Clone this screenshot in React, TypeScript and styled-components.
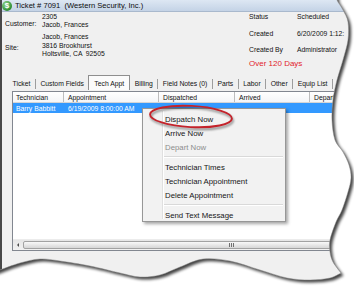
import React from 'react'
import styled, { createGlobalStyle } from 'styled-components'

const GlobalStyle = createGlobalStyle`
  *, *::before, *::after { box-sizing: border-box; }
  html, body { margin: 0; padding: 0; background: #fff; }
  body { overflow: hidden; }
`

type Pt = [number, number]

// hand-traced torn edge of the cut-out screenshot
const rightEdge: Pt[] = [
  [337, -6], [337, 0], [343, 10], [348, 22], [348, 40], [343, 60], [337, 80], [333, 100],
  [332, 120], [335, 140], [343, 152], [349, 165], [351, 178], [348, 192], [342, 210],
  [336, 222], [330, 240], [330, 252], [333, 262], [341, 273],
]
const bottomEdge: Pt[] = [
  [341, 273], [330, 278], [310, 280], [287, 278], [260, 270], [230, 261], [203, 259],
  [180, 267], [160, 275], [140, 277], [120, 273], [90, 266], [60, 261], [40, 259],
  [20, 263], [0, 270], [-6, 272],
]

const smooth = (pts: Pt[]) => {
  let d = ''
  for (let i = 0; i < pts.length - 1; i++) {
    const p0 = pts[i - 1] || pts[i]
    const p1 = pts[i]
    const p2 = pts[i + 1]
    const p3 = pts[i + 2] || p2
    const c1 = [p1[0] + (p2[0] - p0[0]) / 6, p1[1] + (p2[1] - p0[1]) / 6]
    const c2 = [p2[0] - (p3[0] - p1[0]) / 6, p2[1] - (p3[1] - p1[1]) / 6]
    d += ` C${c1[0].toFixed(1)} ${c1[1].toFixed(1)} ${c2[0].toFixed(1)} ${c2[1].toFixed(1)} ${p2[0]} ${p2[1]}`
  }
  return d
}

const paper = `M-6 -6 L337 -6${smooth(rightEdge)}${smooth(bottomEdge)} L-6 -6 Z`

const tabs = ['Ticket', 'Custom Fields', 'Tech Appt', 'Billing', 'Field Notes (0)', 'Parts', 'Labor', 'Other', 'Equip List']
const activeTab = 'Tech Appt'

const columns = [
  { label: 'Technician', w: 51, value: 'Barry Babbitt' },
  { label: 'Appointment', w: 95, value: '6/19/2009 8:00:00 AM' },
  { label: 'Dispatched', w: 76, value: '' },
  { label: 'Arrived', w: 75, value: '' },
  { label: 'Departed', w: 80, value: '' },
]

const menuItems: ({ sep: true } | { label: string; disabled?: boolean })[] = [
  { label: 'Dispatch Now' },
  { label: 'Arrive Now' },
  { label: 'Depart Now', disabled: true },
  { sep: true },
  { label: 'Technician Times' },
  { label: 'Technician Appointment' },
  { label: 'Delete Appointment' },
  { sep: true },
  { label: 'Send Text Message' },
]

const App = () => {
  return (
    <>
      <GlobalStyle />
      <Frame>
        <Window>
          <TitleBar>
            <AppIcon>$</AppIcon>
            <span>Ticket # 7091  (Western Security, Inc.)</span>
          </TitleBar>

          <Header>
            <LeftBlock>
              <Group>
                <Label>Customer:</Label>
                <Lines>
                  <div>2305</div>
                  <div>Jacob, Frances</div>
                </Lines>
              </Group>
              <Group>
                <Label>Site:</Label>
                <Lines>
                  <div>Jacob, Frances</div>
                  <div>3816 Brookhurst</div>
                  <div>Holtsville, CA  92505</div>
                </Lines>
              </Group>
            </LeftBlock>
            <RightBlock>
              <InfoRow><span>Status</span><span>Scheduled</span></InfoRow>
              <InfoRow><span>Created</span><span>6/20/2009 1:12:</span></InfoRow>
              <InfoRow><span>Created By</span><span>Administrator</span></InfoRow>
              <Warning>Over 120 Days</Warning>
            </RightBlock>
          </Header>

          <TabStrip>
            {tabs.map((t, i) => {
              const next = tabs[i + 1]
              const showSep = t !== activeTab && next !== activeTab
              return (
                <React.Fragment key={t}>
                  <Tab $active={t === activeTab}>{t}</Tab>
                  {showSep && <TabSep />}
                </React.Fragment>
              )
            })}
          </TabStrip>

          <ListBox>
            <HeaderRow>
              {columns.map((c, i) => (
                <HeadCell key={c.label} $w={c.w} $first={i === 0}>{c.label}</HeadCell>
              ))}
            </HeaderRow>
            <SelectedRow>
              {columns.map((c, i) => (
                <RowCell key={c.label} $w={c.w} $first={i === 0}>{c.value}</RowCell>
              ))}
            </SelectedRow>
            <ListBody />
            <ScrollBar>
              <ArrowBtn><ArrowLeft /></ArrowBtn>
              <Thumb>
                <Grip><i /><i /><i /></Grip>
              </Thumb>
            </ScrollBar>
          </ListBox>
        </Window>

        <Menu>
          {menuItems.map((m, i) =>
            'sep' in m ? (
              <MenuSep key={i} />
            ) : (
              <MenuItem key={i} $disabled={m.disabled}>{m.label}</MenuItem>
            )
          )}
        </Menu>

        <Circle width="96" height="34" viewBox="0 0 96 34">
          <ellipse cx="45" cy="14.5" rx="41" ry="10.6" fill="none" stroke="#c4232b" strokeWidth="1.9" transform="rotate(3 45 14.5)" />
        </Circle>

        <TornEdge width="354" height="286" viewBox="0 0 354 286">
          <defs>
            <mask id="outside">
              <rect x="-20" y="-20" width="400" height="330" fill="#fff" />
              <path d={paper} fill="#000" />
            </mask>
            <filter id="soft" x="-10%" y="-10%" width="120%" height="120%">
              <feGaussianBlur stdDeviation="1.5" />
            </filter>
          </defs>
          <path d={`M-20 -20 H380 V310 H-20 Z ${paper}`} fill="#fff" fillRule="evenodd" />
          <g mask="url(#outside)">
            <path d={paper} fill="#000" opacity="0.75" transform="translate(2.5 2.5)" filter="url(#soft)" />
          </g>
          <path d={paper} fill="none" stroke="#8a8a8a" strokeWidth="0.5" />
        </TornEdge>
      </Frame>
    </>
  )
}

export default App

const Frame = styled.div`
  position: relative;
  width: 354px;
  height: 286px;
  overflow: hidden;
  background: #fff;
  font-family: "Liberation Sans", Arial, sans-serif;
  color: #111;
`

const Window = styled.div`
  width: 460px;
  height: 286px;
  border-left: 2px solid #484848;
  background: #f0f0f0;
  display: flex;
  flex-direction: column;
`

const TitleBar = styled.div`
  height: 12px;
  flex: none;
  display: flex;
  align-items: center;
  gap: 3px;
  background: linear-gradient(#dde7f3, #c4d3e6);
  border-bottom: 1px solid #a9b9cd;
  font-size: 7.6px;
  white-space: pre;
  color: #0c0c0c;
`

const AppIcon = styled.span`
  width: 10px;
  height: 10px;
  border-radius: 50%;
  background: radial-gradient(circle at 35% 30%, #8fd48a, #2f8f34 70%, #1f6b24);
  color: #fff;
  font-size: 8px;
  font-weight: bold;
  line-height: 10px;
  text-align: center;
`

const Header = styled.div`
  height: 63px;
  flex: none;
  display: flex;
  font-size: 6.8px;
`

const LeftBlock = styled.div`
  width: 247px;
  padding: 0.5px 0 0 3px;
  display: flex;
  flex-direction: column;
  gap: 3.5px;
`

const Group = styled.div`
  display: grid;
  grid-template-columns: 37px auto;
  align-items: center;
`

const Label = styled.div`
  padding-top: 4px;
`

const Lines = styled.div`
  line-height: 8.5px;
  white-space: pre;
`

const RightBlock = styled.div`
  display: flex;
  flex-direction: column;
`

const InfoRow = styled.div`
  display: grid;
  grid-template-columns: 48px auto;
  line-height: 9px;
  margin-bottom: 7.7px;
  white-space: nowrap;
`

const Warning = styled.div`
  margin-top: -2.6px;
  font-size: 8px;
  line-height: 9px;
  color: #e2242c;
`

const TabStrip = styled.div`
  height: 15px;
  flex: none;
  display: flex;
  align-items: flex-end;
  padding-left: 6px;
  font-size: 6.8px;
  white-space: nowrap;
`

const Tab = styled.div<{ $active?: boolean }>`
  display: flex;
  align-items: center;
  height: ${p => (p.$active ? '15px' : '13px')};
  padding: ${p => (p.$active ? '0 5px' : '0 4.5px 1px')};
  background: ${p => (p.$active ? '#fbfbfb' : 'transparent')};
  border: ${p => (p.$active ? '1px solid #8f8f8f' : 'none')};
  border-bottom: none;
`

const TabSep = styled.div`
  width: 1px;
  height: 10px;
  margin-bottom: 1.5px;
  background: #9d9d9d;
`

const ListBox = styled.div`
  width: 440px;
  height: 160px;
  margin: 1px 0 0 10px;
  flex: none;
  border: 1px solid #828790;
  background: #fff;
  display: flex;
  flex-direction: column;
  font-size: 6.8px;
`

const HeaderRow = styled.div`
  height: 11px;
  display: flex;
  background: linear-gradient(#ffffff, #f4f5f7);
  border-bottom: 1px solid #d5d5d5;
`

const HeadCell = styled.div<{ $w: number; $first?: boolean }>`
  width: ${p => p.$w}px;
  flex: none;
  padding: 1px 0 0 ${p => (p.$first ? 3 : 4)}px;
  display: flex;
  align-items: center;
  border-right: 1px solid #bdbdbd;
  white-space: nowrap;
`

const SelectedRow = styled.div`
  height: 10px;
  display: flex;
  background: #3399ff;
  color: #fff;
`

const RowCell = styled.div<{ $w: number; $first?: boolean }>`
  width: ${p => p.$w}px;
  flex: none;
  padding-left: ${p => (p.$first ? 3 : 4)}px;
  display: flex;
  align-items: center;
  white-space: nowrap;
`

const ListBody = styled.div`
  flex: 1;
`

const ScrollBar = styled.div`
  height: 11px;
  display: flex;
  background: linear-gradient(#e6e6e6, #f1f1f1);
  border-top: 1px solid #ececec;
`

const ArrowBtn = styled.div`
  width: 10px;
  display: flex;
  align-items: center;
  justify-content: center;
`

const ArrowLeft = styled.span`
  width: 0;
  height: 0;
  border-top: 2px solid transparent;
  border-bottom: 2px solid transparent;
  border-right: 2px solid #4a4a4a;
`

const Thumb = styled.div`
  flex: 1;
  margin: 1px 0;
  border: 1px solid #a2a2a2;
  border-radius: 2px;
  background: linear-gradient(#f8f8f8, #e9e9e9 45%, #d6d6d6);
  display: flex;
  align-items: center;
  padding-left: 205px;
`

const Grip = styled.div`
  display: flex;
  gap: 1px;
  i {
    display: block;
    width: 1px;
    height: 4px;
    background: #707070;
  }
`

const Menu = styled.div`
  position: absolute;
  left: 142px;
  top: 108px;
  width: 144px;
  height: 114px;
  padding: 3px 0 0 2px;
  background: #f2f2f2;
  border: 1px solid #979797;
  box-shadow: 2px 2px 3px rgba(0, 0, 0, 0.35);
  font-size: 7.8px;
  &::before {
    content: '';
    position: absolute;
    left: 19px;
    top: 2px;
    bottom: 2px;
    width: 2px;
    border-left: 1px solid #e0e0e0;
    border-right: 1px solid #fff;
  }
`

const MenuItem = styled.div<{ $disabled?: boolean }>`
  position: relative;
  height: 14px;
  padding-left: 20px;
  display: flex;
  align-items: center;
  white-space: nowrap;
  color: ${p => (p.$disabled ? '#8d8d8d' : '#161616')};
`

const MenuSep = styled.div`
  position: relative;
  height: 6px;
  margin-left: 19px;
  &::after {
    content: '';
    position: absolute;
    left: 0;
    right: 2px;
    top: 2px;
    height: 2px;
    border-top: 1px solid #d9d9d9;
    border-bottom: 1px solid #fff;
  }
`

const Circle = styled.svg`
  position: absolute;
  left: 146px;
  top: 102px;
  overflow: visible;
  filter: drop-shadow(1px 2px 1.2px rgba(0, 0, 0, 0.45));
`

const TornEdge = styled.svg`
  position: absolute;
  left: 0;
  top: 0;
  pointer-events: none;
`
